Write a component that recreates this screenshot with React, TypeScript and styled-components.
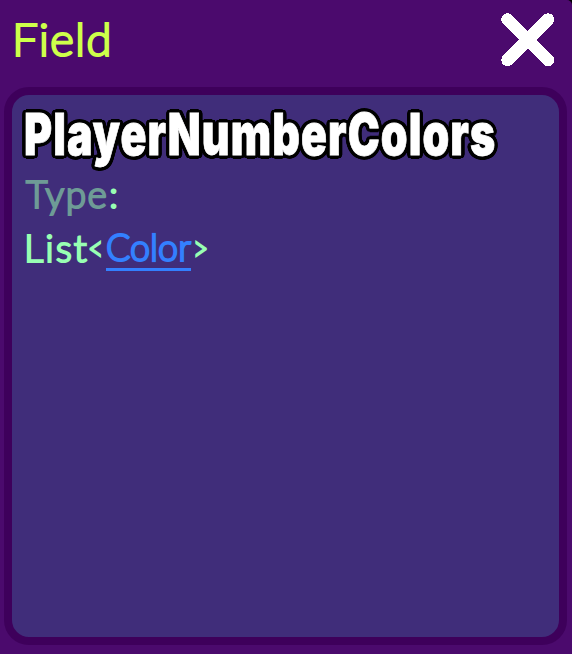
import React from "react";
import styled, { createGlobalStyle } from "styled-components";

const Global = createGlobalStyle`
  * { box-sizing: border-box; }
  body { margin: 0; background: #000; overflow: hidden; }
`;

const Window = styled.main`
  width: 572px;
  height: 654px;
  display: flex;
  flex-direction: column;
  background: #4b0a6d;
  border-top-right-radius: 5px;
  font-family: "Lato", sans-serif;
`;

const Header = styled.header`
  height: 87px;
  display: flex;
  justify-content: space-between;
  padding: 12px 17px 0 12px;
`;

const Line = styled.div<{ $h: number; $indent?: number }>`
  height: ${(p) => p.$h}px;
  line-height: ${(p) => p.$h}px;
  padding-left: ${(p) => p.$indent ?? 0}px;
  display: flex;
  white-space: nowrap;
`;

const Word = styled.span<{ $w: number; $size: number; $scale?: number; $color: string; $gap?: number }>`
  display: block;
  width: ${(p) => p.$w}px;
  font-size: ${(p) => p.$size}px;
  font-weight: 300;
  color: ${(p) => p.$color};
  letter-spacing: ${(p) => p.$gap ?? 0}px;
  transform: scaleX(${(p) => p.$scale ?? 1});
  transform-origin: left center;
  -webkit-text-stroke: 2.2px ${(p) => p.$color};
  stroke-linejoin: round;
`;

const Close = styled.button`
  width: 54px;
  height: 54px;
  margin-top: 1px;
  padding: 0;
  border: 0;
  background: none;
  svg { display: block; }
`;

const Panel = styled.section`
  width: 563px;
  height: 558px;
  margin-left: 4px;
  border: 8px solid #3e005b;
  border-radius: 25px;
  background: #402d7a;
  padding: 9px 12px;
`;

const OUTLINE = Array.from({ length: 24 }, (_, i) => {
  const a = (i / 24) * Math.PI * 2;
  return `${(Math.cos(a) * 4.9).toFixed(2)}px ${(Math.sin(a) * 3.6).toFixed(2)}px 0 #000`;
}).join(", ");

const Title = styled.h1`
  margin: 0;
  height: 60px;
  line-height: 60px;
  font-family: "Inter", sans-serif;
  font-weight: 900;
  font-size: 58px;
  letter-spacing: 1.5px;
  color: #fff;
  white-space: nowrap;
  -webkit-text-stroke: 0.8px #fff;
  text-shadow: ${OUTLINE};
  transform: scaleX(0.738);
  transform-origin: left center;
`;

const Link = styled.a`
  display: block;
  height: 48px;
  width: 85px;
  margin: 0 2px 0 0;
  border-bottom: 3px solid #3380ff;
`;

export default function App() {
  return (
    <>
      <Global />
      <Window>
        <Header>
          <Line $h={54}>
            <Word $w={98} $size={46} $gap={1} $color="#ceff4a">Field</Word>
          </Line>
          <Close aria-label="Close">
            <svg width="54" height="54" viewBox="0 0 54 54" shapeRendering="crispEdges">
              <path d="M6.5 6.5 47 47M47 6.5 6.5 47" stroke="#fff" strokeWidth="12.5" strokeLinecap="round" />
            </svg>
          </Close>
        </Header>
        <Panel>
          <Title>PlayerNumberColors</Title>
          <Line $h={59} $indent={2}>
            <Word $w={83} $size={37} $gap={1.5} $color="#6e9b96">Type</Word>
            <Word $w={10} $size={38} $color="#98ffb3">:</Word>
          </Line>
          <Line $h={48}>
            <Word $w={64} $size={38} $gap={2} $color="#98ffb3">List</Word>
            <Word $w={18} $size={35} $scale={0.75} $color="#98ffb3">&lt;</Word>
            <Link>
              <Word $w={85} $size={37.5} $scale={0.96} $color="#3380ff">Color</Word>
            </Link>
            <Word $w={16} $size={35} $scale={0.75} $color="#98ffb3">&gt;</Word>
          </Line>
        </Panel>
      </Window>
    </>
  );
}
